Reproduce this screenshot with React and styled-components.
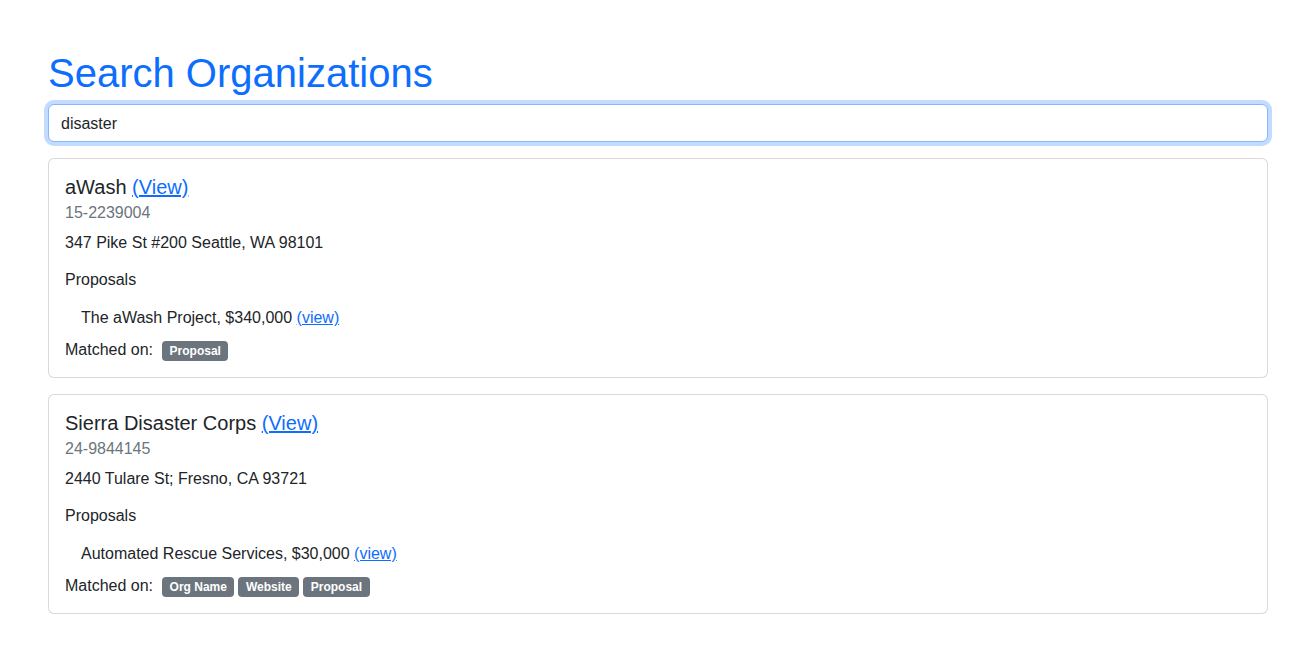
import React from 'react';
import styled, { createGlobalStyle } from 'styled-components';

const orgs = [
    {
        name: 'aWash',
        ein: '15-2239004',
        address: '347 Pike St #200 Seattle, WA 98101',
        proposals: [{ title: 'The aWash Project', amount: '$340,000' }],
        matched: ['Proposal'],
    },
    {
        name: 'Sierra Disaster Corps',
        ein: '24-9844145',
        address: '2440 Tulare St; Fresno, CA 93721',
        proposals: [{ title: 'Automated Rescue Services', amount: '$30,000' }],
        matched: ['Org Name', 'Website', 'Proposal'],
    },
];

const App = () => {
    return (
        <>
            <GlobalStyle />
            <Page>
                <Title>Search Organizations</Title>
                <SearchInput type="text" defaultValue="disaster" readOnly />
                <Results>
                    {orgs.map((org) => (
                        <Card key={org.ein}>
                            <OrgName>
                                {org.name} <Link href="#">(View)</Link>
                            </OrgName>
                            <Ein>{org.ein}</Ein>
                            <Address>{org.address}</Address>
                            <SectionLabel>Proposals</SectionLabel>
                            <ProposalList>
                                {org.proposals.map((p) => (
                                    <ProposalItem key={p.title}>
                                        {p.title}, {p.amount} <Link href="#">(view)</Link>
                                    </ProposalItem>
                                ))}
                            </ProposalList>
                            <MatchedRow>
                                <span>Matched on:</span>
                                <Badges>
                                    {org.matched.map((m) => (
                                        <Badge key={m}>{m}</Badge>
                                    ))}
                                </Badges>
                            </MatchedRow>
                        </Card>
                    ))}
                </Results>
            </Page>
        </>
    );
};
export default App;

const GlobalStyle = createGlobalStyle`
    * { box-sizing: border-box; }
    body {
        margin: 0;
        background: #fff;
        color: #212529;
        font-family: 'Liberation Sans', Arial, sans-serif;
        font-size: 16px;
        line-height: 1.5;
    }
`;

const Page = styled.div`
    padding: 49px 48px 40px;
`;

const Title = styled.h1`
    margin: 0 0 7px;
    font-size: 40px;
    font-weight: 400;
    line-height: 48px;
    color: #0d6efd;
`;

const SearchInput = styled.input`
    display: block;
    width: 100%;
    height: 38px;
    padding: 7px 12px 5px;
    font-family: inherit;
    font-size: 16px;
    line-height: 24px;
    color: #212529;
    background: #fff;
    border: 1px solid #86b7fe;
    border-radius: 6px;
    box-shadow: 0 0 0 4px rgba(13, 110, 253, 0.25);
    outline: none;
`;

const Results = styled.div`
    display: flex;
    flex-direction: column;
    gap: 16px;
    margin-top: 16px;
`;

const Card = styled.div`
    background: #fff;
    border: 1px solid rgba(0, 0, 0, 0.15);
    border-radius: 6px;
    padding: 16px 16px 15px;
`;

const OrgName = styled.h5`
    margin: 0;
    font-size: 20px;
    font-weight: 400;
    line-height: 24px;
`;

const Link = styled.a`
    color: #0d6efd;
    text-decoration: underline;
`;

const Ein = styled.div`
    margin-top: 2px;
    color: #6c757d;
`;

const Address = styled.p`
    margin: 6px 0 13px;
`;

const SectionLabel = styled.p`
    margin: 0 0 14px;
`;

const ProposalList = styled.ul`
    list-style: none;
    margin: 0 0 8px;
    padding-left: 16px;
`;

const ProposalItem = styled.li``;

const MatchedRow = styled.div`
    display: flex;
    align-items: center;
    gap: 9px;
`;

const Badges = styled.div`
    display: flex;
    gap: 4px;
`;

const Badge = styled.span`
    display: inline-block;
    padding: 4px 7.5px;
    font-size: 12px;
    font-weight: 700;
    line-height: 1;
    color: #fff;
    background: #6c757d;
    border-radius: 4px;
    margin-top: 1px;
`;
